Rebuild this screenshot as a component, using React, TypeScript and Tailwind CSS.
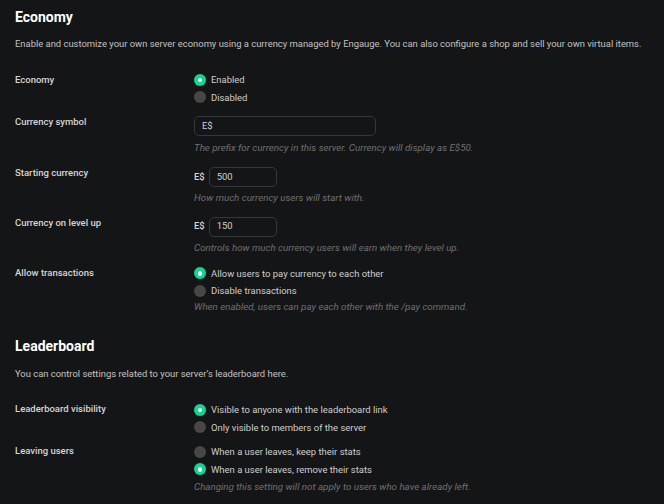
import React from "react";

function Radio({ checked, label }: { checked: boolean; label: string }) {
  return (
    <div className="flex h-[17.5px] items-center">
      {checked ? (
        <span className="flex h-[12px] w-[12px] items-center justify-center rounded-full bg-[#16d394]">
          <span className="h-[4.5px] w-[4.5px] rounded-full bg-[#e9fff6]" />
        </span>
      ) : (
        <span className="h-[12px] w-[12px] rounded-full bg-[#474747]" />
      )}
      <span className="ml-[5px] text-[9.45px] leading-[17.5px] text-[#cfcfcf]">{label}</span>
    </div>
  );
}

function Help({ children, className = "" }: { children: React.ReactNode; className?: string }) {
  return (
    <div className={"whitespace-nowrap text-[9.75px] italic leading-[14px] text-[#707070] " + className}>{children}</div>
  );
}

function Label({ children, className = "" }: { children: React.ReactNode; className?: string }) {
  return (
    <div className={"w-[179px] shrink-0 text-[9.5px] font-medium text-[#d6d6d6] " + className}>{children}</div>
  );
}

export default function App() {
  return (
    <div
      className="min-h-[504px] w-[664px] bg-[#141516] px-[15px] pt-[7px]"
      style={{ fontFamily: "Roboto, 'Noto Sans', sans-serif" }}
    >
      {/* Economy */}
      <h2 className="text-[14px] font-bold leading-[20px] text-white">Economy</h2>
      <p className="mt-[8.5px] whitespace-nowrap text-[9.42px] leading-[16px] text-[#c2c2c2]">
        Enable and customize your own server economy using a currency managed by Engauge. You can also configure a shop and sell your own virtual items.
      </p>

      <div className="mt-[19.5px] flex">
        <Label className="leading-[17px]">Economy</Label>
        <div>
          <Radio checked label="Enabled" />
          <Radio checked={false} label="Disabled" />
        </div>
      </div>

      <div className="mt-[10px] flex">
        <Label className="leading-[12px]">Currency symbol</Label>
        <div>
          <div className="flex h-[20px] w-[182px] items-center rounded-[5px] border border-[#363738] px-[7px] text-[9.45px] text-[#d0d0d0]">
            E$
          </div>
          <Help className="mt-[5px]">The prefix for currency in this server. Currency will display as E$50.</Help>
        </div>
      </div>

      <div className="mt-[12px] flex">
        <Label className="leading-[12px]">Starting currency</Label>
        <div>
          <div className="flex items-center">
            <span className="text-[9.45px] font-medium text-[#d6d6d6]">E$</span>
            <div className="ml-[4px] flex h-[20px] w-[68px] items-center rounded-[5px] border border-[#363738] px-[7px] text-[9.45px] text-[#d0d0d0]">
              500
            </div>
          </div>
          <Help className="mt-[4px]">How much currency users will start with.</Help>
        </div>
      </div>

      <div className="mt-[11.5px] flex">
        <Label className="leading-[12px]">Currency on level up</Label>
        <div>
          <div className="flex items-center">
            <span className="text-[9.45px] font-medium text-[#d6d6d6]">E$</span>
            <div className="ml-[4px] flex h-[20px] w-[68px] items-center rounded-[5px] border border-[#363738] px-[7px] text-[9.45px] text-[#d0d0d0]">
              150
            </div>
          </div>
          <Help className="mt-[4.5px]">Controls how much currency users will earn when they level up.</Help>
        </div>
      </div>

      <div className="mt-[9.5px] flex">
        <Label className="leading-[16px]">Allow transactions</Label>
        <div>
          <Radio checked label="Allow users to pay currency to each other" />
          <Radio checked={false} label="Disable transactions" />
          <Help className="mt-[0px]">When enabled, users can pay each other with the /pay command.</Help>
        </div>
      </div>

      {/* Leaderboard */}
      <h2 className="mt-[22.5px] text-[14px] font-bold leading-[20px] text-white">Leaderboard</h2>
      <p className="mt-[9.5px] text-[9.42px] leading-[16px] text-[#c2c2c2]">
        You can control settings related to your server’s leaderboard here.
      </p>

      <div className="mt-[19.5px] flex">
        <Label className="leading-[16px]">Leaderboard visibility</Label>
        <div>
          <Radio checked label="Visible to anyone with the leaderboard link" />
          <Radio checked={false} label="Only visible to members of the server" />
        </div>
      </div>

      <div className="mt-[7px] flex">
        <Label className="leading-[16px]">Leaving users</Label>
        <div>
          <Radio checked={false} label="When a user leaves, keep their stats" />
          <Radio checked label="When a user leaves, remove their stats" />
          <Help className="mt-[1.5px]">Changing this setting will not apply to users who have already left.</Help>
        </div>
      </div>
    </div>
  );
}
